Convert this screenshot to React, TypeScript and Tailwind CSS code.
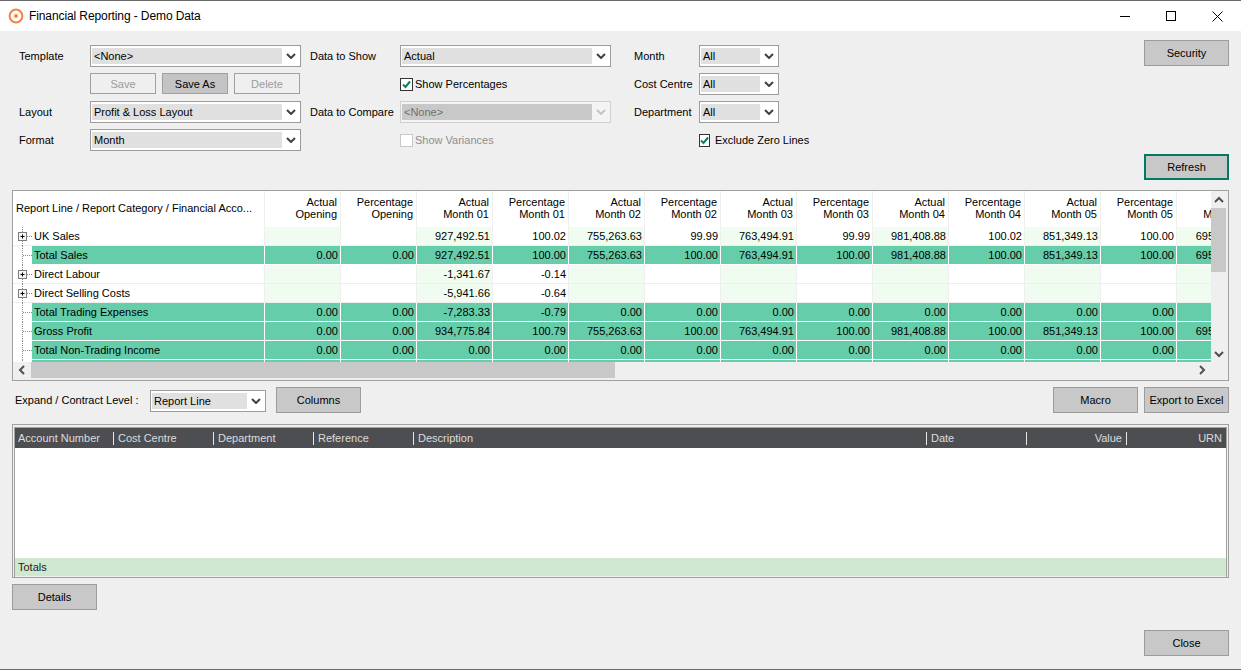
import React from "react";

const Chevron = ({ dis = false }: { dis?: boolean }) => (
  <svg width="10" height="6" viewBox="0 0 10 6" fill="none">
    <path d="M1 1l4 4 4-4" stroke={dis ? "#c4c4c4" : "#404040"} strokeWidth="2" />
  </svg>
);

const Select = ({ value, dis = false, cls = "" }: { value: string; dis?: boolean; cls?: string }) => (
  <div
    className={`flex h-[22px] items-stretch border p-px ${
      dis ? "border-[#cfcfcf] bg-[#f4f4f4] text-[#6f6f6f]" : "border-[#9c9c9c] bg-white text-black"
    } ${cls}`}
  >
    <div className={`my-px flex flex-1 items-center px-[2px] ${dis ? "bg-[#c8c8c8]" : "bg-[#e0e0e0]"}`}>{value}</div>
    <div className="flex w-[17px] items-center justify-center">
      <Chevron dis={dis} />
    </div>
  </div>
);

const Btn = ({
  children,
  cls = "",
  focus = false,
}: {
  children: React.ReactNode;
  cls?: string;
  focus?: boolean;
}) => (
  <button
    className={`flex h-[26px] w-[85px] items-center justify-center bg-[#c8c8c8] text-black ${
      focus ? "border-2 border-[#007a60]" : "border border-[#9c9c9c]"
    } ${cls}`}
  >
    {children}
  </button>
);

const SmallBtn = ({ label, dis = false }: { label: string; dis?: boolean }) => (
  <button
    className={`flex h-[21px] w-[66px] items-center justify-center border border-[#a0a0a0] ${
      dis ? "bg-[#efefef] text-[#9b9b9b]" : "bg-[#c4c4c4] text-black"
    }`}
  >
    {label}
  </button>
);

const Check = ({ label, on = false, dis = false, gap = "gap-[2px]" }: { label: string; on?: boolean; dis?: boolean; gap?: string }) => (
  <div className={`flex h-[22px] items-center whitespace-nowrap ${gap} ${dis ? "text-[#8e8e8e]" : "text-black"}`}>
    <div className={`flex h-[13px] w-[13px] items-center justify-center border bg-white ${dis ? "border-[#c8c8c8]" : "border-[#333333]"}`}>
      {on && (
        <svg width="9" height="9" viewBox="0 0 9 9" fill="none">
          <path d="M1 4.5l2.5 2.5L8 1.5" stroke="#0a7f62" strokeWidth="2" />
        </svg>
      )}
    </div>
    <span>{label}</span>
  </div>
);

type Row = { label: string; tot: boolean; cells: string[] };
const B = "";
const rows: Row[] = [
  { label: "UK Sales", tot: false, cells: [B, B, "927,492.51", "100.02", "755,263.63", "99.99", "763,494.91", "99.99", "981,408.88", "100.02", "851,349.13", "100.00", "695,118.40"] },
  { label: "Total Sales", tot: true, cells: ["0.00", "0.00", "927,492.51", "100.00", "755,263.63", "100.00", "763,494.91", "100.00", "981,408.88", "100.00", "851,349.13", "100.00", "695,118.40"] },
  { label: "Direct Labour", tot: false, cells: [B, B, "-1,341.67", "-0.14", B, B, B, B, B, B, B, B, B] },
  { label: "Direct Selling Costs", tot: false, cells: [B, B, "-5,941.66", "-0.64", B, B, B, B, B, B, B, B, B] },
  { label: "Total Trading Expenses", tot: true, cells: ["0.00", "0.00", "-7,283.33", "-0.79", "0.00", "0.00", "0.00", "0.00", "0.00", "0.00", "0.00", "0.00", "0.00"] },
  { label: "Gross Profit", tot: true, cells: ["0.00", "0.00", "934,775.84", "100.79", "755,263.63", "100.00", "763,494.91", "100.00", "981,408.88", "100.00", "851,349.13", "100.00", "695,118.40"] },
  { label: "Total Non-Trading Income", tot: true, cells: ["0.00", "0.00", "0.00", "0.00", "0.00", "0.00", "0.00", "0.00", "0.00", "0.00", "0.00", "0.00", "0.00"] },
  { label: "", tot: true, cells: [B, B, B, B, B, B, B, B, B, B, B, B, B] },
];

const heads = [
  ["Actual", "Opening"],
  ["Percentage", "Opening"],
  ["Actual", "Month 01"],
  ["Percentage", "Month 01"],
  ["Actual", "Month 02"],
  ["Percentage", "Month 02"],
  ["Actual", "Month 03"],
  ["Percentage", "Month 03"],
  ["Actual", "Month 04"],
  ["Percentage", "Month 04"],
  ["Actual", "Month 05"],
  ["Percentage", "Month 05"],
  ["Actual", "Month 06"],
];

const Tree = ({ plus }: { plus: boolean }) => (
  <svg width="19" height="19" viewBox="0 0 19 19" className="shrink-0" fill="none">
    <path d="M9.5 0V19" stroke="#8a8a8a" strokeDasharray="1 1" />
    {plus ? (
      <>
        <path d="M14 9.5H19" stroke="#8a8a8a" strokeDasharray="1 1" />
        <rect x="5.5" y="5.5" width="8" height="8" fill="#f4f4f4" stroke="#7c7c7c" />
        <path d="M7.5 9.5h4M9.5 7.5v4" stroke="#000" />
      </>
    ) : (
      <path d="M10 9.5H19" stroke="#8a8a8a" strokeDasharray="1 1" />
    )}
  </svg>
);

const Arrow = ({ d }: { d: string }) => (
  <svg width="10" height="10" viewBox="0 0 10 10" fill="none">
    <path d={d} stroke="#505050" strokeWidth="2" />
  </svg>
);

const details: { t: string; w: string; right?: boolean }[] = [
  { t: "Account Number", w: "w-[99px]" },
  { t: "Cost Centre", w: "w-[100px]" },
  { t: "Department", w: "w-[100px]" },
  { t: "Reference", w: "w-[100px]" },
  { t: "Description", w: "w-[513px]" },
  { t: "Date", w: "w-[100px]" },
  { t: "Value", w: "w-[100px]", right: true },
  { t: "URN", w: "w-[99px]", right: true },
];

export default function App() {
  return (
    <div className="flex h-[670px] w-[1241px] flex-col overflow-hidden border-y border-[#6a6a6a] bg-[#efefef] text-[11px] leading-[14px] text-black [font-family:'Liberation_Sans',sans-serif]">
      {/* Title bar */}
      <div className="flex h-[30px] shrink-0 items-center bg-white pl-[8px]">
        <svg width="16" height="16" viewBox="0 0 16 16" fill="none">
          <circle cx="8" cy="8" r="6.4" stroke="#f5813f" strokeWidth="2" />
          <circle cx="8" cy="8" r="2" fill="#f5813f" />
        </svg>
        <span className="ml-[5px] text-[12px] tracking-[-0.1px]">Financial Reporting - Demo Data</span>
        <div className="ml-auto flex h-full">
          <div className="flex w-[46px] items-center justify-center">
            <svg width="10" height="10" viewBox="0 0 10 10"><path d="M0 5.5H10" stroke="#000" /></svg>
          </div>
          <div className="flex w-[46px] items-center justify-center">
            <svg width="10" height="10" viewBox="0 0 10 10" fill="none"><rect x=".5" y=".5" width="9" height="9" stroke="#000" /></svg>
          </div>
          <div className="mr-[1px] flex w-[46px] items-center justify-center">
            <svg width="11" height="11" viewBox="0 0 11 11" fill="none"><path d="M.5.5l10 10M10.5.5l-10 10" stroke="#000" /></svg>
          </div>
        </div>
      </div>

      {/* Form */}
      <div className="flex h-[159px] shrink-0 justify-between pl-[19px] pr-[12px]">
        <div className="grid grid-cols-[71px_211px_99px_211px_88px_80px] grid-rows-[22px_22px_22px_22px] gap-y-[6px] pt-[14px]">
          <div className="flex items-center">Template</div>
          <Select value="<None>" />
          <div className="ml-[9px] flex items-center">Data to Show</div>
          <Select value="Actual" />
          <div className="ml-[23px] flex items-center">Month</div>
          <Select value="All" />

          <div />
          <div className="flex gap-[6px]">
            <SmallBtn label="Save" dis />
            <SmallBtn label="Save As" />
            <SmallBtn label="Delete" dis />
          </div>
          <div />
          <Check label="Show Percentages" on />
          <div className="ml-[23px] flex items-center">Cost Centre</div>
          <Select value="All" />

          <div className="flex items-center">Layout</div>
          <Select value="Profit & Loss Layout" />
          <div className="ml-[9px] flex items-center">Data to Compare</div>
          <Select value="<None>" dis />
          <div className="ml-[23px] flex items-center">Department</div>
          <Select value="All" />

          <div className="flex items-center">Format</div>
          <Select value="Month" />
          <div />
          <Check label="Show Variances" dis />
          <div />
          <Check label="Exclude Zero Lines" on gap="gap-[5px]" />
        </div>
        <div className="flex flex-col justify-between pb-[10px] pt-[9px]">
          <Btn>Security</Btn>
          <Btn focus>Refresh</Btn>
        </div>
      </div>

      {/* Report table */}
      <div className="mx-[12px] flex h-[191px] shrink-0 flex-col border border-[#a0a0a0] bg-[#efefef]">
        <div className="flex h-[171px] shrink-0">
          <div className="w-[1198px] shrink-0 overflow-hidden bg-white">
            <div className="flex h-[36px] w-max">
              <div className="flex w-[252px] items-center whitespace-nowrap border-r border-[#efefef] pb-[2px] pl-[3px]">
                Report Line / Report Category / Financial Acco...
              </div>
              {heads.map((h, i) => (
                <div key={i} className="flex w-[76px] flex-col justify-center border-r border-[#efefef] pb-[2px] pr-[3px] text-right leading-[12px]">
                  <div>{h[0]}</div>
                  <div>{h[1]}</div>
                </div>
              ))}
            </div>
            {rows.map((r, ri) => (
              <div key={ri} className={`flex h-[19px] w-max border-b ${r.tot ? "border-white" : "border-[#efefef]"}`}>
                <div className={`flex w-[252px] border-r ${r.tot ? "border-white" : "border-[#efefef]"}`}>
                  <Tree plus={!r.tot} />
                  <div className={`flex flex-1 items-center pl-[2px] ${r.tot ? "bg-[#66cdaa]" : ""}`}>{r.label}</div>
                </div>
                {r.cells.map((c, i) => (
                  <div
                    key={i}
                    className={`flex w-[76px] items-center justify-end border-r pr-[2px] ${
                      r.tot
                        ? "border-white bg-[#66cdaa]"
                        : i % 2 === 0
                        ? "border-[#efefef] bg-[#f0fcf0]"
                        : "border-[#efefef] bg-white"
                    }`}
                  >
                    {c}
                  </div>
                ))}
              </div>
            ))}
          </div>
          <div className="flex w-[15px] flex-col">
            <div className="flex h-[17px] items-center justify-center"><Arrow d="M1 7l4-4 4 4" /></div>
            <div className="h-[64px] bg-[#c8c8c8]" />
            <div className="flex-1" />
            <div className="flex h-[17px] items-center justify-center"><Arrow d="M1 3l4 4 4-4" /></div>
          </div>
        </div>
        <div className="flex h-[16px] w-[1198px] items-stretch">
          <div className="flex w-[18px] items-center justify-center"><Arrow d="M7 1L3 5l4 4" /></div>
          <div className="w-[584px] bg-[#c8c8c8]" />
          <div className="flex-1" />
          <div className="flex w-[18px] items-center justify-center"><Arrow d="M3 1l4 4-4 4" /></div>
        </div>
      </div>

      {/* Action row */}
      <div className="mx-[12px] flex h-[43px] shrink-0 items-start pt-[6px]">
        <div className="ml-[3px] mt-[6px] w-[135px]">Expand / Contract Level :</div>
        <Select value="Report Line" cls="mt-[3px] w-[116px]" />
        <Btn cls="ml-[10px]">Columns</Btn>
        <Btn cls="ml-auto">Macro</Btn>
        <Btn cls="ml-[6px]">Export to Excel</Btn>
      </div>

      {/* Details panel */}
      <div className="mx-[12px] flex h-[154px] shrink-0 flex-col border border-[#a0a0a0] pl-px pr-px pt-[2px]">
        <div className="flex flex-1 flex-col border-l border-r border-t border-[#a0a0a0] bg-white">
          <div className="flex h-[20px] shrink-0 items-center bg-[#4d4e52] text-[#dcdcdc]">
            {details.map((d, i) => (
              <div key={d.t} className={`flex h-[13px] items-center ${d.w} ${i === 0 ? "pl-[3px]" : "pl-[4px]"} ${d.right ? "justify-end pr-[4px]" : ""} ${i < details.length - 1 ? "border-r border-[#e8e8e8]" : ""}`}>
                {d.t}
              </div>
            ))}
          </div>
          <div className="flex-1" />
          <div className="flex h-[18px] shrink-0 items-center bg-[#d0e8d0] pl-[3px] text-[#222222]">Totals</div>
          <div className="h-px shrink-0 bg-[#efefef]" />
        </div>
      </div>

      {/* Footer */}
      <div className="mx-[12px] mt-[6px] flex flex-col">
        <Btn>Details</Btn>
        <Btn cls="mt-[20px] self-end">Close</Btn>
      </div>
    </div>
  );
}
